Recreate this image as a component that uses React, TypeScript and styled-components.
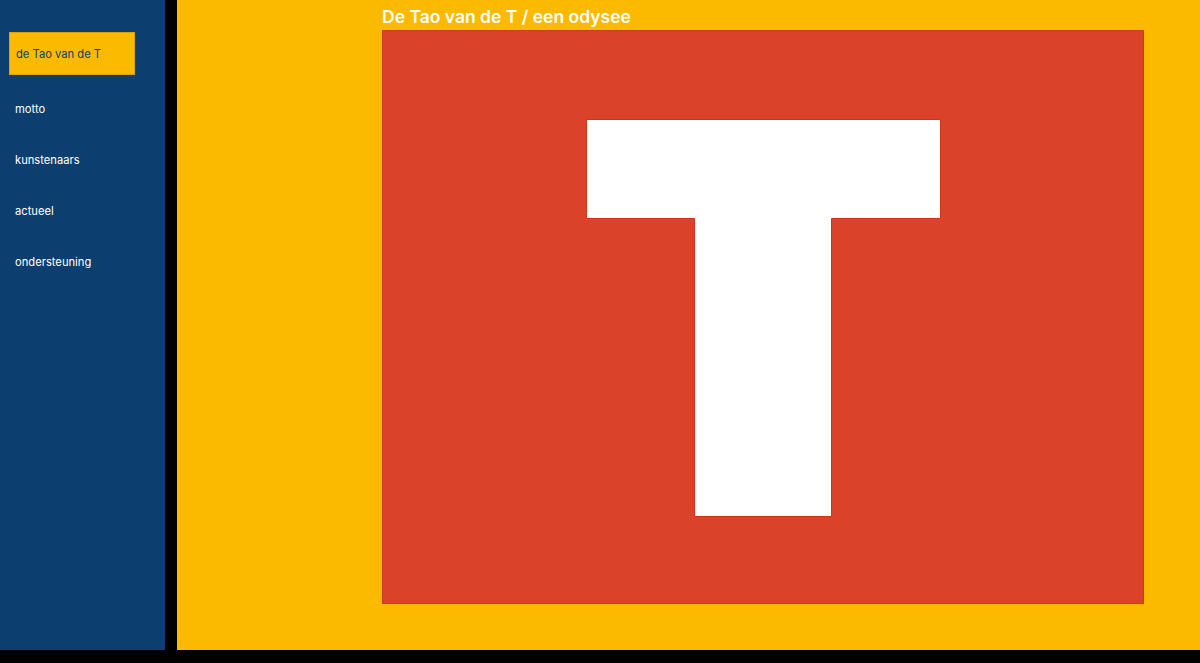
import React from 'react';
import styled, { createGlobalStyle } from 'styled-components';

const GlobalStyle = createGlobalStyle`
  html, body {
    margin: 0;
    padding: 0;
    background: #000;
    font-family: Inter, "Noto Sans", "Liberation Sans", sans-serif;
  }
`;

const Page = styled.div`
  display: flex;
  gap: 12px;
  height: 650px;
`;

const Sidebar = styled.nav`
  width: 165px;
  flex-shrink: 0;
  background: #0c3e6f;
  display: flex;
  flex-direction: column;
  gap: 8px;
  padding: 32px 0 0 9px;
  box-sizing: border-box;
`;

const NavItem = styled.a<{ $active?: boolean }>`
  display: flex;
  align-items: center;
  width: 126px;
  height: 43px;
  box-sizing: border-box;
  padding: 0 5px 0 ${(p) => (p.$active ? '6px' : '5px')};
  font-size: 11.2px;
  text-decoration: none;
  cursor: pointer;
  color: ${(p) => (p.$active ? '#0c3e6f' : '#fff')};
  background: ${(p) => (p.$active ? '#fbba00' : 'transparent')};
  border: 1px solid ${(p) => (p.$active ? '#d9a20a' : 'transparent')};
  margin-bottom: ${(p) => (p.$active ? '4px' : '0')};
`;

const Main = styled.main`
  flex: 1;
  background: #fbba00;
  padding: 3px 0 0 205px;
  box-sizing: border-box;
`;

const Title = styled.h1`
  margin: 0;
  font-size: 17.5px;
  line-height: 27px;
  font-weight: 600;
  color: #fff;
`;

const Poster = styled.div`
  width: 762px;
  height: 574px;
  box-sizing: border-box;
  background: #da422a;
  border: 1px solid #cc3a22;
`;

const items = ['de Tao van de T', 'motto', 'kunstenaars', 'actueel', 'ondersteuning'];

export default function App() {
  const [active, setActive] = React.useState(0);

  return (
    <>
      <GlobalStyle />
      <Page>
        <Sidebar>
          {items.map((label, i) => (
            <NavItem key={label} $active={i === active} onClick={() => setActive(i)}>
              {label}
            </NavItem>
          ))}
        </Sidebar>
        <Main>
          <Title>De Tao van de T / een odysee</Title>
          <Poster>
            <svg width="760" height="572" viewBox="0 0 760 572">
              <polygon
                points="203.5,88.5 557.5,88.5 557.5,187.5 448.5,187.5 448.5,485.5 311.5,485.5 311.5,187.5 203.5,187.5"
                fill="#fff"
                stroke="#d4321c"
                strokeWidth="1"
              />
            </svg>
          </Poster>
        </Main>
      </Page>
    </>
  );
}
